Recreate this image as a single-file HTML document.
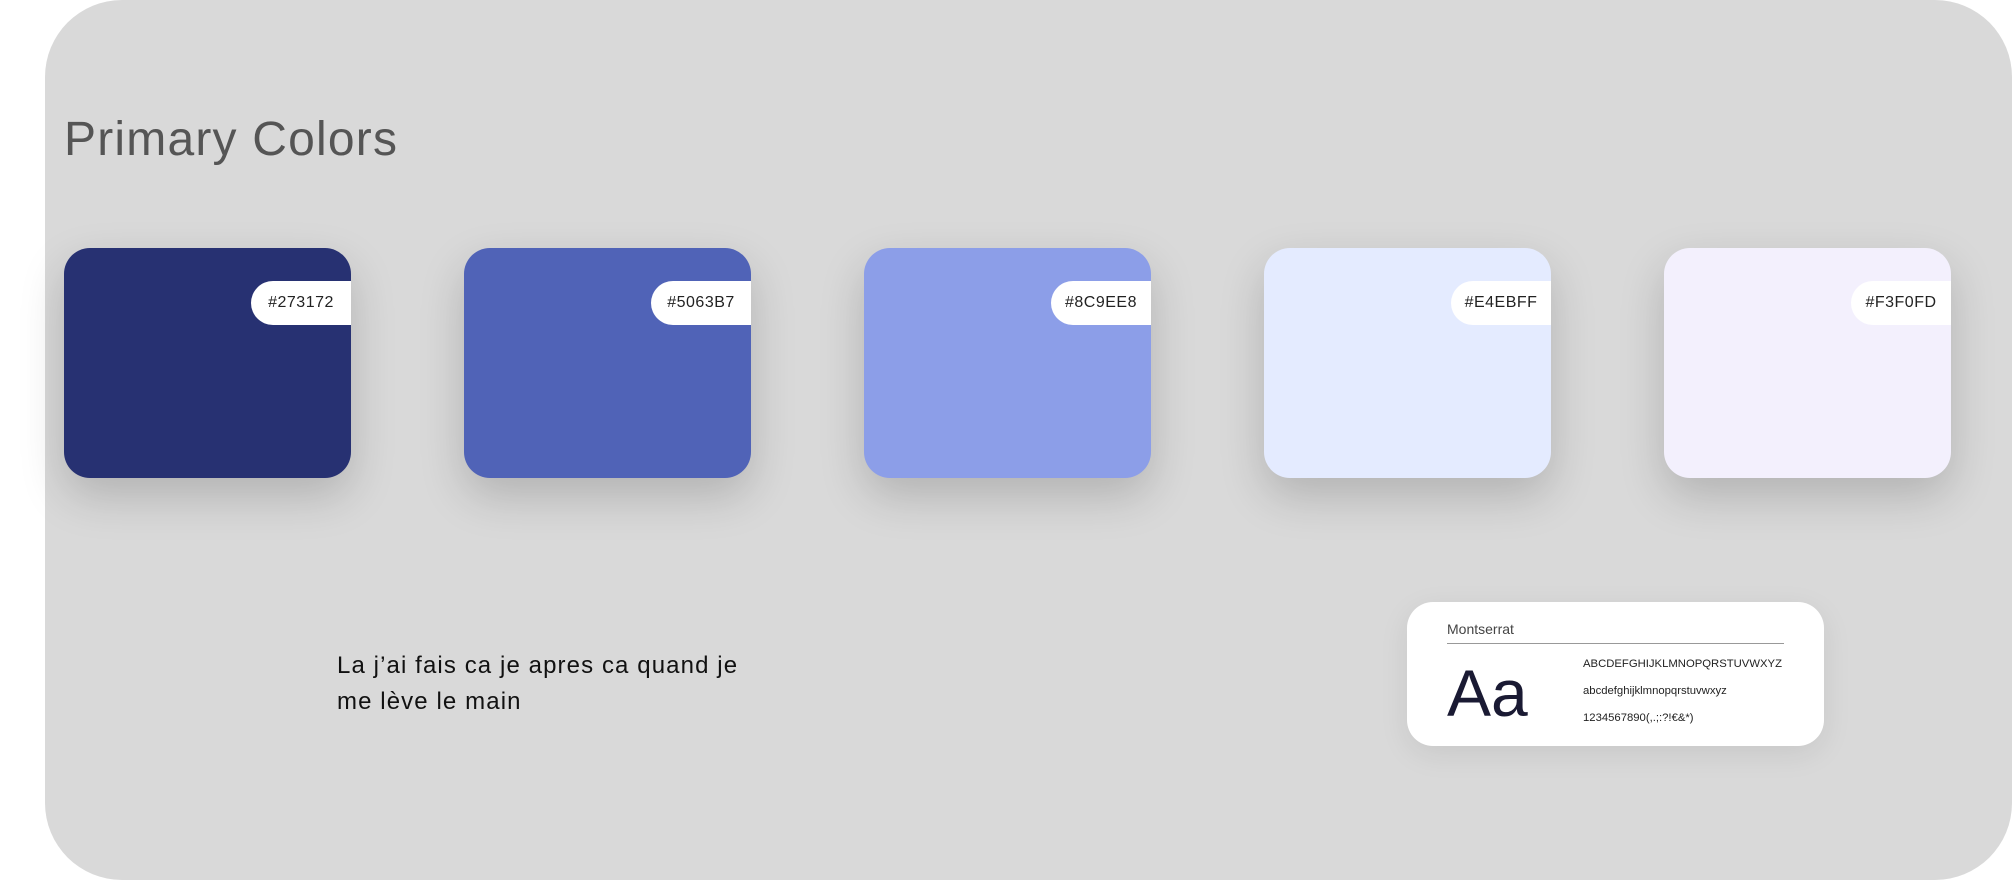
<!DOCTYPE html>
<html><head><meta charset="utf-8"><style>
html,body{margin:0;padding:0;width:2015px;height:880px;background:#fff;overflow:hidden}
body{position:relative;font-family:"Liberation Sans",sans-serif}
.panel{position:absolute;left:45px;top:0;width:1967px;height:880px;background:#d9d9d9;border-radius:77px}
.title{position:absolute;left:64px;top:112px;font-size:48px;color:#555;letter-spacing:1.2px;line-height:56px}
.card{position:absolute;top:248px;width:287px;height:230px;border-radius:26px;box-shadow:0 18px 45px rgba(0,0,0,0.18);overflow:hidden}
.pill{position:absolute;right:0;top:33px;width:100px;height:44px;background:#fff;border-radius:22px 0 0 22px;font-size:16px;color:#222;line-height:44px;text-align:center;letter-spacing:0.5px}
.para{position:absolute;left:337px;top:648px;font-size:24px;line-height:36px;color:#111;letter-spacing:1.1px}
.font{position:absolute;left:1407px;top:602px;width:417px;height:144px;background:#fff;border-radius:26px;box-shadow:0 8px 30px rgba(0,0,0,0.08)}
</style></head><body>
<div class="panel"></div>
<div class="title">Primary Colors</div>
<div class="card" style="left:64px;background:#273172"><div class="pill">#273172</div></div>
<div class="card" style="left:464px;background:#5063B7"><div class="pill">#5063B7</div></div>
<div class="card" style="left:864px;background:#8C9EE8"><div class="pill">#8C9EE8</div></div>
<div class="card" style="left:1264px;background:#E4EBFF"><div class="pill">#E4EBFF</div></div>
<div class="card" style="left:1664px;background:#F3F0FD"><div class="pill">#F3F0FD</div></div>
<div class="para">La j’ai fais ca je apres ca quand je<br>me lève le main</div>
<div class="font">
<div style="position:absolute;left:40px;top:19px;font-size:14px;color:#444">Montserrat</div>
<div style="position:absolute;left:40px;top:41px;width:337px;height:1px;background:#999"></div>
<div style="position:absolute;left:40px;top:54px;font-size:66px;color:#1a1a33;line-height:74px">Aa</div>
<div style="position:absolute;left:176px;top:49px;font-size:11.3px;color:#222;line-height:27px">ABCDEFGHIJKLMNOPQRSTUVWXYZ<br>abcdefghijklmnopqrstuvwxyz<br>1234567890(,.;:?!€&amp;*)</div>
</div>
</body></html>
